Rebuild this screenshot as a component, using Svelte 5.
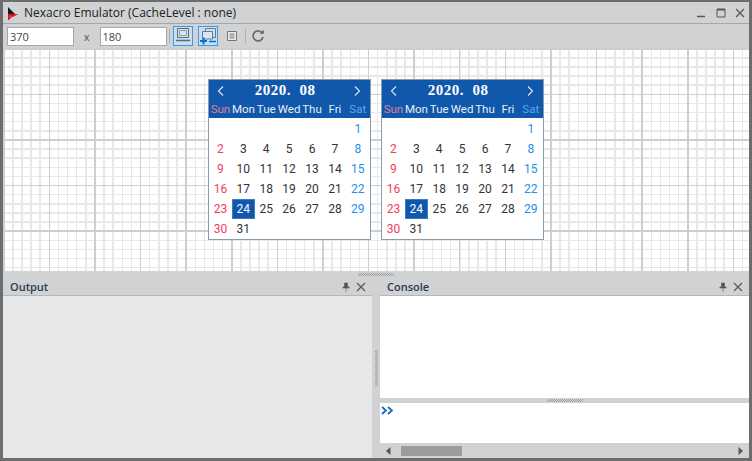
<script>
  const weekNames = ["Sun", "Mon", "Tue", "Wed", "Thu", "Fri", "Sat"];
  const days = [];
  for (let i = 0; i < 6; i++) days.push(null);
  for (let d = 1; d <= 31; d++) days.push(d);
  const calendars = [0, 1];

  function dayClass(i, d) {
    if (d === 24) return "day selected";
    if (i % 7 === 0) return "day sun";
    if (i % 7 === 6) return "day sat";
    return "day";
  }
</script>

<div class="window">
  <div class="titlebar">
    <svg class="logo" width="12" height="14" viewBox="0 0 12 14">
      <path d="M1 0 L8 7 L1 7 Z" fill="#1a1a1a" />
      <path d="M1 7 L11 7 L6 10 L1 9 Z" fill="#d8141c" />
      <path d="M1 9 L5 10 L1 13.5 Z" fill="#d8141c" />
    </svg>
    <span class="title">Nexacro Emulator (CacheLevel : none)</span>
    <div class="winbtns">
      <svg width="12" height="12" viewBox="0 0 12 12"><path d="M1 9.5 H9" stroke="#555" stroke-width="1.5" /></svg>
      <svg width="12" height="12" viewBox="0 0 12 12"><path d="M2 2.5 H10 V10 H2 Z" fill="none" stroke="#555" stroke-width="1" /><path d="M2 2.5 H10" stroke="#555" stroke-width="2" /></svg>
      <svg width="12" height="12" viewBox="0 0 12 12"><path d="M2 2 L10 10 M10 2 L2 10" stroke="#555" stroke-width="1.2" /></svg>
    </div>
  </div>

  <div class="toolbar">
    <input class="size" value="370" />
    <span class="x">x</span>
    <input class="size" value="180" />
    <span class="sep"></span>
    <button class="tool on">
      <svg width="18" height="18" viewBox="0 0 18 18">
        <path d="M3.5 1.5 H14.5 V10.5 H3.5 Z" fill="#d4e6f8" stroke="#666" />
        <path d="M5.5 3.5 H12.5 V8.5 H5.5 Z" fill="none" stroke="#999" />
        <path d="M2 13.5 H16" stroke="#666" stroke-width="1.5" />
      </svg>
    </button>
    <button class="tool on">
      <svg width="18" height="18" viewBox="0 0 18 18">
        <path d="M6.5 1.5 H16.5 V10.5 H6.5 Z" fill="none" stroke="#777" />
        <path d="M3.5 4.5 H13.5 V12 H3.5 Z" fill="#d4e6f8" stroke="#777" />
        <path d="M1 14 H8 M4.5 10.5 V17.5" stroke="#0f6fc6" stroke-width="2" />
        <path d="M10 14.5 H17" stroke="#0f6fc6" stroke-width="1.5" />
      </svg>
    </button>
    <svg class="list" width="12" height="12" viewBox="0 0 12 12">
      <path d="M1.5 1.5 H10.5 V10.5 H1.5 Z" fill="#eee" stroke="#777" />
      <path d="M3.5 4 H8.5 M3.5 6 H8.5 M3.5 8 H8.5" stroke="#777" />
    </svg>
    <span class="sep small"></span>
    <svg class="reload" width="14" height="14" viewBox="0 0 14 14">
      <path d="M11.5 4.5 A5 5 0 1 0 12 8" fill="none" stroke="#666" stroke-width="1.6" />
      <path d="M8.5 4.8 H12.8 V0.8 Z" fill="#666" />
    </svg>
  </div>

  <div class="canvas">
    {#each calendars as c (c)}
      <div class="calendar">
        <div class="cal-head">
          <svg width="7" height="10" viewBox="0 0 7 10"><path d="M6 0.5 L1.5 5 L6 9.5" fill="none" stroke="#dfe9f5" stroke-width="1.1" /></svg>
          <span class="month">2020.&nbsp; 08</span>
          <svg width="7" height="10" viewBox="0 0 7 10"><path d="M1 0.5 L5.5 5 L1 9.5" fill="none" stroke="#dfe9f5" stroke-width="1.1" /></svg>
        </div>
        <div class="weeks">
          {#each weekNames as w, i (w)}
            <span class={i === 0 ? "wsun" : i === 6 ? "wsat" : ""}>{w}</span>
          {/each}
        </div>
        <div class="days">
          {#each days as d, i (i)}
            <span class={dayClass(i, d)}>{d ?? ""}</span>
          {/each}
        </div>
      </div>
    {/each}
  </div>

  <div class="hsplit"><span class="grip"></span></div>

  <div class="panels">
    <div class="panel output">
      <div class="panel-head">
        <span>Output</span>
        <div class="panel-btns">
          <svg width="10" height="10" viewBox="0 0 10 10"><path d="M3.5 1 H6.5 V4 L8.5 6 H1.5 L3.5 4 Z M5 6 V10" fill="#555" stroke="#555" stroke-width="0.6" /></svg>
          <svg width="10" height="10" viewBox="0 0 10 10"><path d="M1 1 L9 9 M9 1 L1 9" stroke="#555" stroke-width="1.1" /></svg>
        </div>
      </div>
      <div class="output-body"></div>
    </div>
    <div class="vsplit"><span class="vgrip"></span></div>
    <div class="panel console">
      <div class="panel-head">
        <span>Console</span>
        <div class="panel-btns">
          <svg width="10" height="10" viewBox="0 0 10 10"><path d="M3.5 1 H6.5 V4 L8.5 6 H1.5 L3.5 4 Z M5 6 V10" fill="#555" stroke="#555" stroke-width="0.6" /></svg>
          <svg width="10" height="10" viewBox="0 0 10 10"><path d="M1 1 L9 9 M9 1 L1 9" stroke="#555" stroke-width="1.1" /></svg>
        </div>
      </div>
      <div class="console-log"></div>
      <div class="console-split"><span class="grip"></span></div>
      <div class="console-input">
        <svg width="12" height="9" viewBox="0 0 12 9">
          <path d="M1 1 L5 4.5 L1 8 M7 1 L11 4.5 L7 8" fill="none" stroke="#1668c8" stroke-width="1.8" />
        </svg>
      </div>
      <div class="scrollbar">
        <svg width="5" height="8" viewBox="0 0 5 8"><path d="M4.5 0 V8 L0 4 Z" fill="#555" /></svg>
        <span class="thumb"></span>
        <svg class="next" width="5" height="8" viewBox="0 0 5 8"><path d="M0.5 0 V8 L5 4 Z" fill="#555" /></svg>
      </div>
    </div>
  </div>
</div>

<style>
  :global(body) {
    background: #d0d2d4;
    overflow: hidden;
  }
  .window {
    box-sizing: border-box;
    width: 752px;
    height: 461px;
    border: solid #6b6d6f;
    border-width: 2px 3px 3px 3px;
    background: #d0d2d4;
    display: flex;
    flex-direction: column;
    font-family: "Open Sans", "Noto Sans", sans-serif;
    overflow: hidden;
  }
  .titlebar {
    height: 21px;
    display: flex;
    align-items: center;
    padding: 0 0 0 3px;
    border-bottom: 1px solid #a4a6a8;
    flex: none;
  }
  .logo {
    margin: 2px 5px 0 1px;
  }
  .title {
    font-size: 12px;
    color: #222;
  }
  .winbtns {
    margin-left: auto;
    margin-right: 3px;
    display: flex;
    gap: 7px;
  }
  .toolbar {
    height: 24px;
    flex: none;
    display: flex;
    align-items: center;
    padding-left: 4px;
  }
  .size {
    box-sizing: border-box;
    width: 67px;
    height: 19px;
    border: 1px solid #a8a8a8;
    background: #fff;
    padding: 0 2px;
    font: 11px "Open Sans", sans-serif;
    color: #444;
    outline: none;
  }
  .x {
    width: 25.5px;
    text-align: center;
    font-size: 11px;
    color: #555;
  }
  .sep {
    width: 1px;
    height: 14px;
    background: #aeb0b2;
    margin: 0 2.5px 0 2.5px;
  }
  .sep.small {
    margin: 0 5px 0 6px;
  }
  .tool {
    box-sizing: border-box;
    width: 20px;
    height: 20px;
    padding: 0;
    border: 1px solid #3c9ae8;
    background: #c4e0f8;
    display: flex;
    align-items: center;
    justify-content: center;
    margin-right: 5px;
  }
  .list {
    margin-left: 3px;
    margin-right: 1px;
  }
  .canvas {
    box-sizing: border-box;
    height: 223px;
    flex: none;
    display: flex;
    gap: 10px;
    padding: 31px 0 0 205px;
    background-color: #fff;
    background-image:
      repeating-linear-gradient(to right, #cfcfcf 0 1.5px, transparent 1.5px 45.6px),
      repeating-linear-gradient(to bottom, #cfcfcf 0 1.5px, transparent 1.5px 45.6px),
      repeating-linear-gradient(to right, #e8e8e8 0 1.5px, transparent 1.5px 9.12px),
      repeating-linear-gradient(to bottom, #e8e8e8 0 1.5px, transparent 1.5px 9.12px);
  }
  .calendar {
    box-sizing: border-box;
    width: 163px;
    height: 161px;
    border: 1px solid #8b9bae;
    background: #fff;
    font-family: Roboto, "Noto Sans", sans-serif;
  }
  .cal-head {
    height: 21px;
    background: #1058ab;
    display: flex;
    align-items: center;
    justify-content: space-between;
    padding: 0 9px 0 8px;
  }
  .month {
    font: bold 15px "Liberation Serif", serif;
    letter-spacing: 0.5px;
    color: #fff;
    margin-right: 8px;
  }
  .weeks {
    height: 17px;
    background: #1058ab;
    display: grid;
    grid-template-columns: repeat(7, 22.9px);
    font-size: 11.5px;
    line-height: 17px;
    text-align: center;
    color: #e8eef6;
    white-space: nowrap;
  }
  .wsun {
    color: #e07d9c;
  }
  .wsat {
    color: #5fa6ec;
  }
  .days {
    display: grid;
    grid-template-columns: repeat(7, 22.9px);
    grid-auto-rows: 20px;
    padding-top: 1px;
    font-size: 12px;
    color: #333;
  }
  .day {
    display: flex;
    align-items: center;
    justify-content: center;
  }
  .sun {
    color: #f2405c;
  }
  .sat {
    color: #2490e8;
  }
  .selected {
    background: #1058ab;
    color: #fff;
    box-shadow: inset 0 0 0 1px #3b7cc4;
  }
  .hsplit {
    height: 7px;
    flex: none;
    display: flex;
    justify-content: center;
    align-items: center;
  }
  .grip {
    width: 36px;
    height: 3px;
    background: repeating-conic-gradient(#a0a0a0 0 25%, transparent 0 50%) 0 0 / 2px 2px;
  }
  .panels {
    flex: 1;
    display: flex;
    min-height: 0;
  }
  .panel {
    display: flex;
    flex-direction: column;
    min-width: 0;
  }
  .panel.output {
    width: 369px;
    flex: none;
  }
  .panel.console {
    flex: 1;
  }
  .panel-head {
    height: 17px;
    flex: none;
    display: flex;
    align-items: center;
    padding: 0 6px 0 7px;
    border-bottom: 1px solid #b4b6b8;
    font-size: 11px;
    font-weight: 600;
    color: #2a3a4e;
  }
  .panel-btns {
    margin-left: auto;
    display: flex;
    gap: 5px;
    align-items: center;
  }
  .output-body {
    flex: 1;
    background: #e6e7e8;
  }
  .vsplit {
    width: 8px;
    flex: none;
    display: flex;
    align-items: center;
    justify-content: center;
  }
  .vgrip {
    width: 3px;
    height: 36px;
    background: repeating-conic-gradient(#a0a0a0 0 25%, transparent 0 50%) 0 0 / 2px 2px;
  }
  .console-log {
    height: 102px;
    flex: none;
    background: #fff;
  }
  .console-split {
    height: 5px;
    flex: none;
    display: flex;
    justify-content: center;
    align-items: center;
  }
  .console-input {
    flex: 1;
    background: #fff;
    padding: 3px 0 0 1px;
  }
  .console-input svg {
    display: block;
  }
  .scrollbar {
    height: 15px;
    flex: none;
    display: flex;
    align-items: center;
    padding: 0 6px;
  }
  .thumb {
    width: 61px;
    height: 10px;
    margin-left: 10px;
    background: #9b9c9e;
  }
  .next {
    margin-left: auto;
  }
</style>
